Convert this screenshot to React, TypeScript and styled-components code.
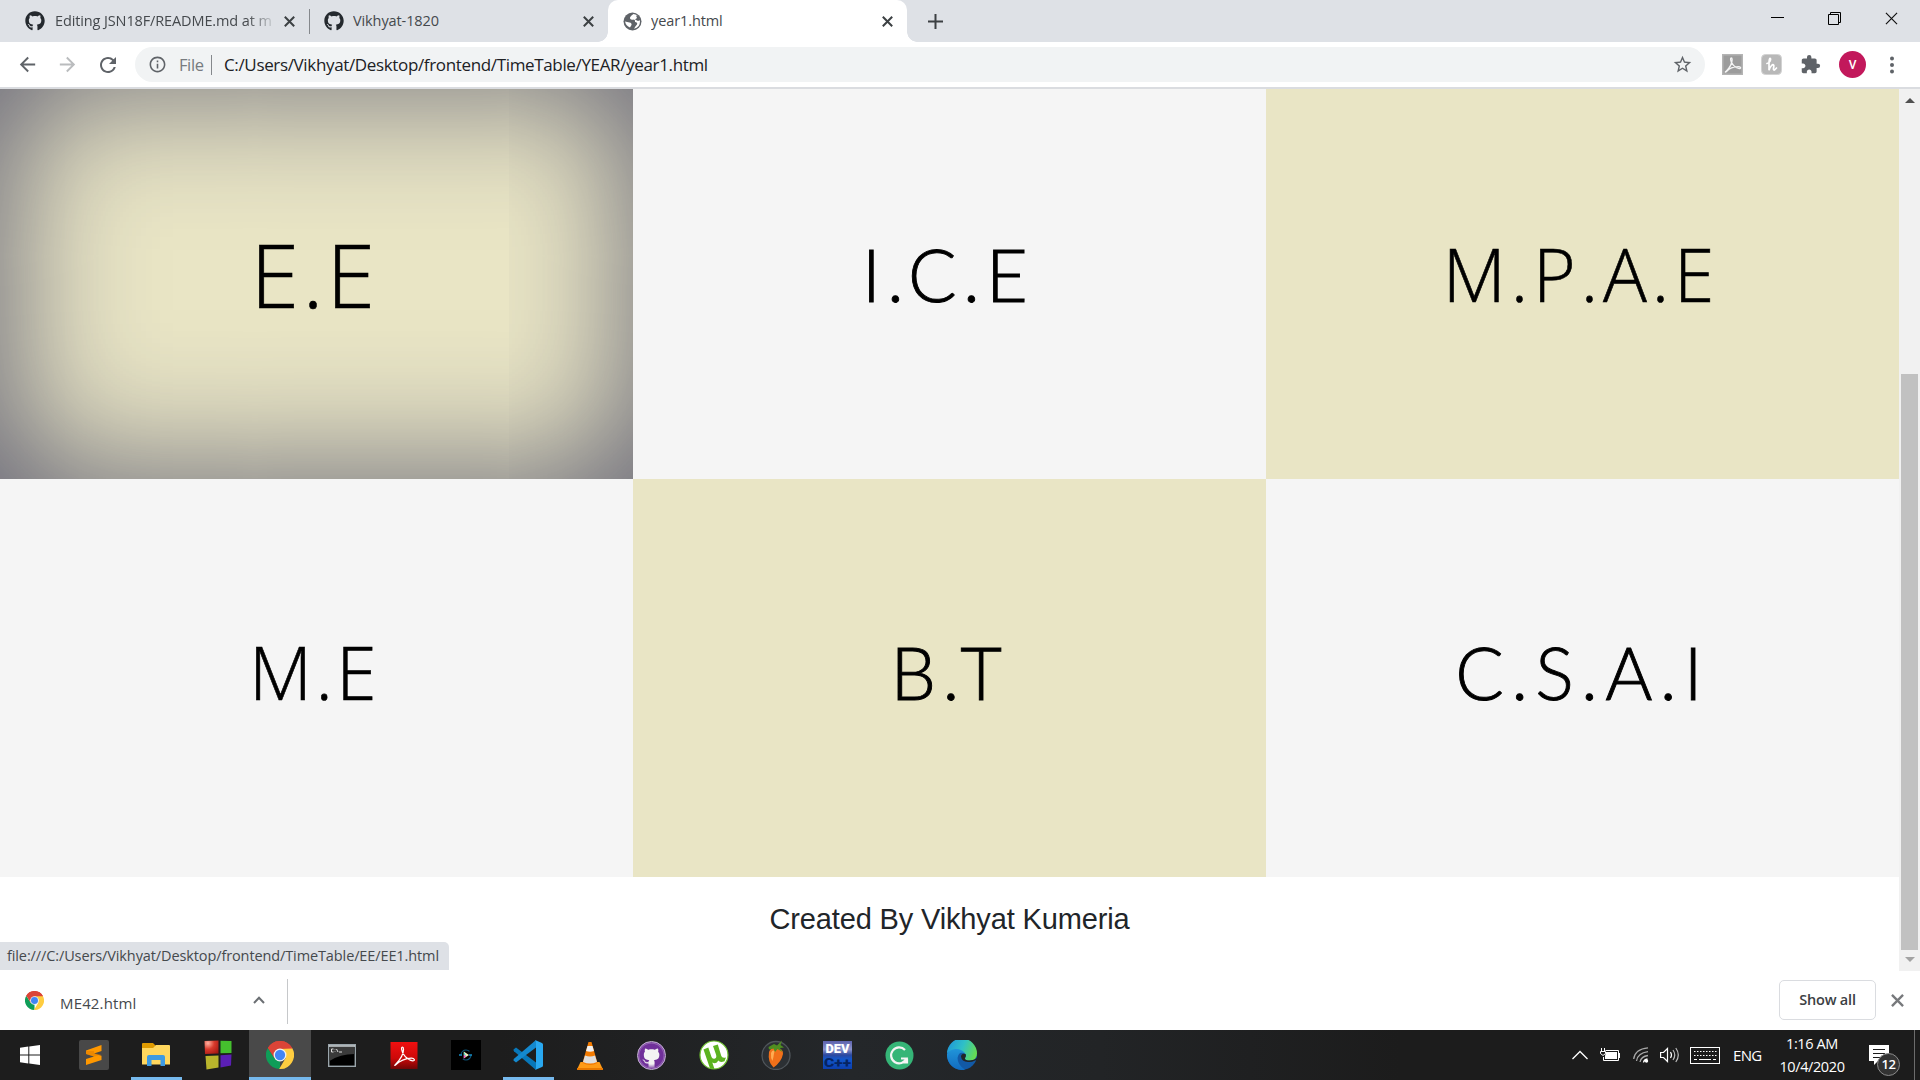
import React from "react";
import styled, { createGlobalStyle, css } from "styled-components";
import { FaGithub } from "react-icons/fa";
import {
  MdPublic,
  MdArrowBack,
  MdArrowForward,
  MdRefresh,
  MdInfoOutline,
  MdStarBorder,
  MdExtension,
} from "react-icons/md";

const GlobalStyle = createGlobalStyle`
  * { box-sizing: border-box; }
  html, body { margin: 0; padding: 0; overflow: hidden; }
  svg { display: block; flex: none; }
`;

const uiFont = css`
  font-family: "Open Sans", "Noto Sans", sans-serif;
`;

const Screen = styled.div`
  width: 1920px;
  height: 1080px;
  display: flex;
  flex-direction: column;
  background: #fff;
  overflow: hidden;
  ${uiFont}
`;

/* ---------- tab strip ---------- */

const TabStrip = styled.div`
  height: 42px;
  display: flex;
  background: #dee1e6;
  padding-left: 10px;
`;

const Tab = styled.div<{ $width: number; $active?: boolean; $divider?: boolean }>`
  position: relative;
  width: ${(p) => p.$width}px;
  height: 42px;
  display: flex;
  align-items: center;
  padding: 0 14px 0 15px;
  color: #45494d;
  background: ${(p) => (p.$active ? "#fff" : "transparent")};
  border-radius: 10px 10px 0 0;
  ${(p) =>
    p.$divider &&
    css`
      &::after {
        content: "";
        position: absolute;
        right: -1px;
        top: 9px;
        width: 1px;
        height: 25px;
        background: #85888c;
      }
    `}
  ${(p) =>
    p.$active &&
    css`
      &::before,
      &::after {
        content: "";
        position: absolute;
        bottom: 0;
        width: 10px;
        height: 10px;
      }
      &::before {
        left: -10px;
        background: radial-gradient(circle at 0 0, transparent 9.5px, #fff 10px);
      }
      &::after {
        right: -10px;
        background: radial-gradient(circle at 100% 0, transparent 9.5px, #fff 10px);
      }
    `}
`;

const TabTitle = styled.span<{ $spacing: number; $fade?: boolean }>`
  flex: 1;
  min-width: 0;
  margin: 0 11px 0 9px;
  overflow: hidden;
  white-space: nowrap;
  font-size: 14.5px;
  line-height: 20px;
  letter-spacing: ${(p) => p.$spacing}px;
  ${(p) =>
    p.$fade &&
    css`
      margin-left: 10px;
      mask-image: linear-gradient(90deg, #000 88%, rgba(0, 0, 0, 0.15));
    `}
`;

const NewTab = styled.div`
  width: 56px;
  display: flex;
  align-items: center;
  justify-content: center;
`;

const WindowButtons = styled.div`
  margin-left: auto;
  display: flex;
  gap: 44px;
  padding: 12px 22px 0 0;
`;

/* ---------- toolbar ---------- */

const Toolbar = styled.div`
  height: 47px;
  display: flex;
  align-items: center;
  padding: 0 20px 0 16px;
  border-bottom: 2px solid #dadce0;
`;

const NavButton = styled.div<{ $muted?: boolean }>`
  width: 40px;
  display: flex;
  color: ${(p) => (p.$muted ? "#babcbe" : "#5f6368")};
`;

const Omnibox = styled.div`
  width: 1570px;
  height: 35px;
  margin-left: -1px;
  padding: 0 12px 0 13px;
  display: flex;
  align-items: center;
  border-radius: 18px;
  background: #f1f3f4;
  color: #5f6368;
`;

const Scheme = styled.span`
  width: 32px;
  margin-left: 12px;
  font-size: 16.5px;
  line-height: 24px;
  letter-spacing: -0.4px;
  color: #777b80;
`;

const SchemeRule = styled.span`
  width: 1px;
  height: 20px;
  margin-right: 12px;
  background: #85888c;
`;

const Url = styled.span`
  flex: 1;
  font-size: 17px;
  line-height: 24px;
  letter-spacing: -0.35px;
  color: #202124;
`;

const Extensions = styled.div`
  flex: 1;
  display: flex;
  align-items: center;
  justify-content: space-between;
  padding-left: 17px;
  color: #5f6368;
`;

const Avatar = styled.div`
  width: 27px;
  height: 27px;
  border-radius: 50%;
  display: flex;
  align-items: center;
  justify-content: center;
  font: 500 12px Roboto, sans-serif;
  color: #fff;
  background: #c2185b;
`;

/* ---------- page ---------- */

const Viewport = styled.div`
  position: relative;
  height: 882px;
  display: flex;
  overflow: hidden;
`;

const Page = styled.main`
  width: 1899px;
  height: 882px;
  overflow: hidden;
`;

const Grid = styled.section`
  display: grid;
  grid-template-columns: repeat(3, 633px);
  grid-auto-rows: 398px;
  margin-top: -8px;
`;

const Tile = styled.a<{ $sand?: boolean; $hovered?: boolean }>`
  display: flex;
  align-items: center;
  justify-content: center;
  color: #000;
  background: ${(p) => (p.$sand ? "#e9e5c5" : "#f5f5f5")};
  box-shadow: ${(p) => (p.$hovered ? "inset 4px 0 142px #58586e" : "none")};
`;

const Branch = styled.span<{ $open?: boolean; $size: number; $spacing: number; $trail: number }>`
  font-family: ${(p) => (p.$open ? '"Open Sans"' : "Lato")}, sans-serif;
  font-weight: 300;
  font-size: ${(p) => p.$size}px;
  line-height: 110px;
  letter-spacing: ${(p) => p.$spacing}px;
  padding: 0 ${(p) => p.$trail}px 13px 0;
  white-space: nowrap;
  -webkit-text-stroke: ${(p) => (p.$open ? 0.6 : 0.9)}px #000;
`;

const Footer = styled.footer`
  padding-top: 24px;
  text-align: center;
  font: 29px/36px "Liberation Sans", Arial, sans-serif;
  letter-spacing: -0.15px;
  color: #212529;
`;

const Scrollbar = styled.div`
  width: 21px;
  display: flex;
  flex-direction: column;
  align-items: center;
  justify-content: space-between;
  padding: 9px 0;
  background: #f1f1f1;
`;

const Arrow = styled.i<{ $down?: boolean }>`
  border: 5px solid transparent;
  ${(p) =>
    p.$down
      ? css`border-top-color: #a3a3a3; border-bottom: 0;`
      : css`border-bottom-color: #505050; border-top: 0;`}
`;

const Thumb = styled.div`
  width: 17px;
  height: 576px;
  margin: 270px 0 7px;
  background: #c1c1c1;
`;

const StatusBubble = styled.div`
  position: absolute;
  left: 0;
  bottom: 1px;
  width: 449px;
  height: 28px;
  padding-left: 7px;
  border-radius: 0 5px 0 0;
  background: #dee1e6;
  color: #45494d;
  font-size: 14.5px;
  line-height: 27px;
  letter-spacing: -0.11px;
  white-space: nowrap;
`;

/* ---------- download shelf ---------- */

const Shelf = styled.div`
  height: 59px;
  display: flex;
  align-items: center;
  padding: 0 16px 1px 0;
`;

const Download = styled.div`
  width: 288px;
  height: 45px;
  margin-top: 3px;
  padding: 0 22px 3px 25px;
  display: flex;
  align-items: center;
  border-right: 1px solid #c6c8ca;
`;

const FileName = styled.span`
  flex: 1;
  margin: 5px 0 0 16px;
  font-size: 15px;
  letter-spacing: 0.15px;
  color: #45494d;
`;

const ShowAll = styled.div`
  width: 97px;
  height: 40px;
  margin: 0 15px 0 auto;
  padding-bottom: 1px;
  display: flex;
  align-items: center;
  justify-content: center;
  border: 1px solid #dadce0;
  border-radius: 5px;
  font-size: 14.5px;
  font-weight: 600;
  letter-spacing: -0.2px;
  color: #3c4043;
`;

/* ---------- taskbar ---------- */

const Taskbar = styled.div`
  height: 50px;
  display: flex;
  background: linear-gradient(90deg, #1d1d1d 0, #1d1d1d 500px, #24272a 850px, #222426 1100px, #1c1c1c 1400px);
`;

const StartButton = styled.div`
  width: 63px;
  display: flex;
  align-items: center;
  padding-left: 20px;
`;

const TaskButton = styled.div<{ $running?: boolean; $active?: boolean }>`
  position: relative;
  width: 61.98px;
  display: flex;
  align-items: center;
  justify-content: center;
  background: ${(p) => (p.$active ? "#494949" : "transparent")};
  ${(p) =>
    (p.$running || p.$active) &&
    css`
      &::after {
        content: "";
        position: absolute;
        bottom: 0;
        left: ${p.$active ? 0 : 6}px;
        right: ${p.$active ? 0 : 5}px;
        height: 3px;
        background: #76b9ed;
      }
    `}
`;

const Tray = styled.div`
  margin-left: auto;
  display: flex;
  align-items: center;
  color: #fff;
`;

const TrayIcon = styled.div<{ $width: number }>`
  width: ${(p) => p.$width}px;
`;

const Language = styled.span`
  width: 44px;
  font-size: 15px;
  letter-spacing: -0.7px;
`;

const Clock = styled.div`
  width: 70px;
  text-align: center;
  font-size: 14.5px;
  line-height: 23px;
  letter-spacing: -0.4px;
  white-space: nowrap;
`;

const Notifications = styled.div`
  position: relative;
  width: 36px;
  height: 40px;
  padding-top: 9px;
  margin: 2px 9px 0 22px;
`;

const Count = styled.span`
  position: absolute;
  left: 8px;
  top: 17px;
  width: 23px;
  height: 23px;
  border: 1px solid #8b8b8b;
  border-radius: 50%;
  background: #333;
  text-align: center;
  font-size: 13px;
  font-weight: 600;
  line-height: 21px;
  letter-spacing: -0.5px;
`;

const DesktopEdge = styled.div`
  width: 6px;
  height: 50px;
  border-left: 1px solid #6c6c6c;
`;

/* ---------- drawings ---------- */

const Cross = ({ size = 11, color = "#3c4043", weight = 2 }) => (
  <svg width={size} height={size} viewBox="0 0 11 11" stroke={color} strokeWidth={weight}>
    <path d="M.8.8l9.4 9.4M10.2.8L.8 10.2" />
  </svg>
);

const GlobeIcon = () => (
  <svg width="19" height="19" viewBox="0 0 19 19">
    <circle cx="9.500" cy="9.500" r="9" fill="#5f6368" />
    <path
      d="M2 9.500L6.500 10.500Q9 11 8.500 13L7 15.500Q3 14 2 9.500zM10.500 2Q6.500 4.500 7 6.500Q8 8.200 11 7.500Q12.500 8 12 10Q15 10.500 14 12.500Q12.500 14 11 16.800Q17 15.500 17 9.500Q16.500 3 10.500 2z"
      fill="#fff"
    />
    <path d="M13 3.500L14 6L12 7.500L15 9L17.500 8L16 4.500z" fill="#5f6368" />
  </svg>
);

const ChromeLogo = ({ size }: { size: number }) => (
  <svg width={size} height={size} viewBox="0 0 48 48">
    <path fill="#db4437" d="M24 24L3.2 12A24 24 0 0 1 44.8 12z" />
    <path fill="#0f9d58" d="M24 24V48A24 24 0 0 1 3.2 12L14.5 29.5z" />
    <path fill="#ffcd40" d="M44.8 12A24 24 0 0 1 22.500 47.950L33.500 29.500L24 13.500z" />
    <path fill="#db4437" d="M24 13H45.300L44.800 12A24 24 0 0 0 3.200 12L14.500 29.500z" />
    <circle cx="24" cy="24" r="11" fill="#f1f1f1" />
    <circle cx="24" cy="24" r="8.800" fill="#4285f4" />
  </svg>
);

const acrobatCurve =
  "M5 23.500C8 20.500 13.500 14 13.500 7.500C13.500 4.500 11.300 4.500 11.500 7.500C12 12.500 17.500 19 23 19.500C26 19.500 25 16.700 21.500 16.800C15.500 17 9 20 6.300 23C4.800 24.700 3.700 24.300 5 23.500z";

const AcrobatMini = () => (
  <svg width="21" height="21" viewBox="0 0 28 28">
    <rect width="28" height="28" fill="#b4b4b4" />
    <rect x="2" y="2" width="24" height="24" fill="#9c9c9c" />
    <path d={acrobatCurve} fill="none" stroke="#f5f5f5" strokeWidth="1.800" />
  </svg>
);

const HoneyIcon = () => (
  <svg width="21" height="21" viewBox="0 0 21 21">
    <rect x=".5" y=".5" width="20" height="20" rx="4" fill="#b8b8b8" stroke="#d2d2d2" />
    <path
      d="M6 9.500C9 9 10.500 4.500 9 4.300C7.300 4.500 8.300 11 8 16.200C9 12.500 12.300 9 12.800 11.500C13 13.500 11.500 16.300 13.500 16L15.500 14"
      fill="none"
      stroke="#fff"
      strokeWidth="1.700"
      strokeLinecap="round"
    />
  </svg>
);

const SublimeIcon = () => (
  <svg width="30" height="30" viewBox="0 0 30 30">
    <rect width="30" height="30" rx="2" fill="#484848" />
    <path fill="#ff9800" d="M7 10.500L22.500 5V11L15 13.500L22.500 15.800V20L7 25V19L15 16.500L7 14z" />
    <path fill="#d97700" d="M7 14L15 16.500L22.500 14.500L15 13.200V11L7 11z" opacity=".45" />
  </svg>
);

const FolderIcon = () => (
  <svg width="28" height="24" viewBox="0 0 28 24">
    <path fill="#e09b00" d="M0 1Q0 0 1 0H11L14 3V7H0z" />
    <path fill="#ffd75e" d="M0 5H11L14 2H27Q28 2 28 3V21.500H0z" />
    <path fill="#3d9ae2" d="M5 23V14Q5 12 7 12H21Q23 12 23 14V23H18.500V17H9.500V23z" />
  </svg>
);

const BlocksIcon = () => (
  <svg width="28" height="30" viewBox="0 0 28 30">
    <defs>
      <radialGradient id="redBlock" cx=".25" cy=".2" r="1">
        <stop offset="0" stopColor="#ffb0a0" />
        <stop offset=".45" stopColor="#d93a2c" />
        <stop offset="1" stopColor="#a01510" />
      </radialGradient>
    </defs>
    <path fill="url(#redBlock)" d="M.5 1L14.500.5V13.500L1 14z" />
    <path fill="#45c02e" d="M16.500.7L27.500 1V13L16.500 13.300z" />
    <path fill="#b9b52c" d="M1.500 16L14.500 15.500V27.500L2.500 29.500z" />
    <path fill="#5b1fb5" d="M16.500 15.300L27.500 14.500L27 25.500L16.500 27.500z" />
  </svg>
);

const TerminalIcon = () => (
  <svg width="28" height="23" viewBox="0 0 28 23">
    <rect x=".7" y=".7" width="26.600" height="21.600" fill="#000" stroke="#9aa5ab" strokeWidth="1.400" />
    <path d="M1 2H27" stroke="#cdd3d6" strokeWidth="1.600" />
    <path d="M1.500 3H26.500V10Q12 10 1.500 17z" fill="#3a3a3a" />
    <path d="M5.500 5H3.500V8H5.500M7 5.500V6M7 7.500V8M8.500 5L10 8M11 8H14" fill="none" stroke="#ddd" />
  </svg>
);

const AcrobatIcon = () => (
  <svg width="28" height="27" viewBox="0 0 28 28">
    <defs>
      <linearGradient id="acrobat" x1="0" y1="0" x2="0" y2="1">
        <stop offset="0" stopColor="#f01010" />
        <stop offset=".6" stopColor="#cc0909" />
        <stop offset="1" stopColor="#720505" />
      </linearGradient>
    </defs>
    <rect width="28" height="28" fill="url(#acrobat)" />
    <path d={acrobatCurve} fill="none" stroke="#fff" strokeWidth="1.300" />
  </svg>
);

const PlayerIcon = () => (
  <svg width="30" height="30" viewBox="0 0 30 30">
    <rect width="30" height="30" fill="#000" />
    <circle cx="15" cy="15" r="5" fill="none" stroke="#0c5578" strokeWidth="1.200" strokeDasharray="11 4.700" />
    <path d="M8 15h3M18 15h3" stroke="#168cc4" strokeWidth="1.500" />
    <path d="M12.800 11.500V18.500L18 15z" fill="#f4f4c0" />
    <path d="M12.800 11.500V15L15 16z" fill="#46d7c8" />
    <path d="M12.800 18.500V15L15 16z" fill="#f044c8" />
  </svg>
);

const CodeIcon = () => (
  <svg width="30" height="30" viewBox="0 0 30 30">
    <path fill="#0877b9" d="M.5 9.500L3 7.500L23 22.500V30L1 11.200Q.2 10.300.5 9.500z" />
    <path fill="#1489cf" d="M.5 20.500L3 22.500L23 7.500V0L1 18.800Q.2 19.700.5 20.500z" />
    <path fill="#29a8f0" d="M22 0L29 3Q30 3.500 30 4.500V25.500Q30 26.500 29 27L22 30Q23 29.500 23 28V2Q23 .5 22 0z" />
  </svg>
);

const ConeIcon = () => (
  <svg width="26" height="29" viewBox="0 0 26 29">
    <path fill="#ff9b17" d="M3.500 21H22.500L26 28.500H0z" />
    <path fill="#e97800" d="M0 27H26V29H0z" />
    <path fill="#f47b00" d="M11.500 1H14.500L20.500 22Q13 26 5.500 22z" />
    <path fill="#f1f1f1" d="M10.500 5H15.500L17 10Q13 11.500 9 10z" />
    <path fill="#dedede" d="M8 14.500Q13 16.500 18 14.500L20 21Q13 24 6 21z" />
  </svg>
);

const OctocatBadge = styled.div`
  width: 29px;
  height: 29px;
  padding: 1px;
  border: 1px solid #c9b8d8;
  border-radius: 50%;
  background: radial-gradient(circle, #f3f3f3 45%, #70309a 72%);
  color: #70309a;
`;

const TorrentIcon = () => (
  <svg width="30" height="30" viewBox="0 0 30 30">
    <circle cx="15" cy="15" r="14" fill="#fff" stroke="#6cbf2e" strokeWidth="1.200" />
    <path
      d="M4.500 9.500L9.300 7.500L12.500 17Q13.500 19.500 16 18.500Q18 17.500 17 14.500L14 6L18.800 4.500L22.300 16Q23 18.500 27 17.500L25.500 21.200Q21 23 19.300 20.500Q17.500 24.500 13.300 22.500L15.500 29L11 28.500z"
      fill="#5cb320"
    />
  </svg>
);

const FruitIcon = () => (
  <svg width="30" height="30" viewBox="0 0 30 30">
    <circle cx="15" cy="15.500" r="14" fill="#2c3034" stroke="#50565b" strokeWidth="1.300" />
    <path fill="#f0701a" d="M8 12Q10 7 15.500 8Q22.500 8.500 22 14Q20.500 22 12.500 27.500Q6.500 22 8 12z" />
    <path fill="#ffad52" d="M10 13Q11.500 9.500 13.500 11Q12.500 17 11.500 21Q9.500 18 10 13z" />
    <path fill="#4f8e20" d="M7.500 7L13 4L16 5.500L21 .5L19.500 5L23 7.500L19 8L21.500 12L16.500 9L14 12L12.500 8.500L8 9.500z" />
  </svg>
);

const DevIcon = () => (
  <svg width="29" height="28" viewBox="0 0 29 28">
    <defs>
      <linearGradient id="dev" x1="0" y1="0" x2="0" y2="1">
        <stop offset="0" stopColor="#5d62ad" />
        <stop offset=".3" stopColor="#8b93cb" />
        <stop offset=".5" stopColor="#2c489e" />
        <stop offset=".65" stopColor="#1257cc" />
        <stop offset="1" stopColor="#0c3fae" />
      </linearGradient>
    </defs>
    <rect width="29" height="28" fill="url(#dev)" />
    <text x="14.500" y="11.700" textAnchor="middle" textLength="24" lengthAdjust="spacingAndGlyphs" fontFamily="Roboto" fontSize="12" fontWeight="900" fill="#fff">DEV</text>
    <text x="14.500" y="26" textAnchor="middle" textLength="27" lengthAdjust="spacingAndGlyphs" fontFamily="Roboto" fontSize="12" fontWeight="900" fill="#062463">C++</text>
  </svg>
);

const GrammarIcon = () => (
  <svg width="29" height="29" viewBox="0 0 29 29">
    <circle cx="14.500" cy="14.500" r="14" fill="#35b577" />
    <path
      d="M20 9A8 8 0 1 0 21.500 17.500H16M18 21.500H22V17.500"
      fill="none"
      stroke="#f4f4f4"
      strokeWidth="2.200"
    />
  </svg>
);

const EdgeIcon = () => (
  <svg width="30" height="30" viewBox="0 0 30 30">
    <defs>
      <linearGradient id="edgeTop" x1="0" y1=".3" x2="1" y2=".6">
        <stop offset="0" stopColor="#1f98d9" />
        <stop offset=".5" stopColor="#2fc0c7" />
        <stop offset="1" stopColor="#67dc4e" />
      </linearGradient>
      <linearGradient id="edgeSide" x1="0" y1="0" x2="0" y2="1">
        <stop offset="0" stopColor="#2196da" />
        <stop offset="1" stopColor="#116bc0" />
      </linearGradient>
    </defs>
    <circle cx="15" cy="15" r="15" fill="#1259a6" />
    <path fill="url(#edgeSide)" d="M0 14Q3 7 10 8Q18 9 18.500 14Q12 10 10.500 18Q10.500 25 18 29.700A15 15 0 0 1 0 14z" />
    <path fill="url(#edgeTop)" d="M0 13.500A15 15 0 0 1 30 13.500Q30 20 23 20.500Q17.500 20.500 18 18Q20 15.500 17.500 12.500Q14 8.500 8 9Q2 10 0 13.500z" />
    <path fill="#222527" d="M18.500 14Q14.500 13 14 16.500Q14.500 21.500 21 22Q25 22.300 27.500 20.800L31 19.500V17Q28 20.500 23 20.500Q17.500 20.500 18 18Q19.500 16 18.500 14z" />
  </svg>
);

const branches = [
  { name: "E.E", sand: true, hovered: true, open: true, size: 88, spacing: 3.2, trail: 4 },
  { name: "I.C.E", size: 72, spacing: 6.2, trail: 3 },
  { name: "M.P.A.E", sand: true, open: true, size: 73, spacing: 4.9, trail: 3 },
  { name: "M.E", open: true, size: 73, spacing: 3.5, trail: 4 },
  { name: "B.T", sand: true, size: 72, spacing: 6.5, trail: 0 },
  { name: "C.S.A.I", size: 72, spacing: 7.3, trail: 0 },
];

export default function App() {
  return (
    <Screen>
      <GlobalStyle />
      <TabStrip>
        <Tab $width={299} $divider>
          <FaGithub size={20} color="#24292e" />
          <TabTitle $spacing={-0.12} $fade>Editing JSN18F/README.md at m</TabTitle>
          <Cross />
        </Tab>
        <Tab $width={299}>
          <FaGithub size={20} color="#24292e" />
          <TabTitle $spacing={-0.1}>Vikhyat-1820</TabTitle>
          <Cross />
        </Tab>
        <Tab $width={299} $active>
          <GlobeIcon />
          <TabTitle $spacing={-0.1}>year1.html</TabTitle>
          <Cross />
        </Tab>
        <NewTab>
          <svg width="15" height="15" viewBox="0 0 15 15" stroke="#3c4043" strokeWidth="2">
            <path d="M7.500 0V15M0 7.500H15" />
          </svg>
        </NewTab>
        <WindowButtons>
          <svg width="13" height="13" stroke="#000"><path d="M0 5.500H13" /></svg>
          <svg width="13" height="13" fill="none" stroke="#000"><path d="M.5 2.500H10.500V12.500H.5zM2.500 2.500V.5H12.500V10.500H10.500" /></svg>
          <Cross size={13} color="#111" weight={1} />
        </WindowButtons>
      </TabStrip>

      <Toolbar>
        <NavButton><MdArrowBack size={23} /></NavButton>
        <NavButton $muted><MdArrowForward size={23} /></NavButton>
        <NavButton><MdRefresh size={24} /></NavButton>
        <Omnibox>
          <MdInfoOutline size={19} />
          <Scheme>File</Scheme>
          <SchemeRule />
          <Url>C:/Users/Vikhyat/Desktop/frontend/TimeTable/YEAR/year1.html</Url>
          <MdStarBorder size={21} />
        </Omnibox>
        <Extensions>
          <AcrobatMini />
          <HoneyIcon />
          <MdExtension size={21} />
          <Avatar>V</Avatar>
          <svg width="16" height="18" viewBox="0 0 16 18" fill="#5f6368">
            <circle cx="8" cy="2.500" r="2" /><circle cx="8" cy="9" r="2" /><circle cx="8" cy="15.500" r="2" />
          </svg>
        </Extensions>
      </Toolbar>

      <Viewport>
        <Page>
          <Grid>
            {branches.map((b) => (
              <Tile key={b.name} $sand={b.sand} $hovered={b.hovered}>
                <Branch $open={b.open} $size={b.size} $spacing={b.spacing} $trail={b.trail}>{b.name}</Branch>
              </Tile>
            ))}
          </Grid>
          <Footer>Created By Vikhyat Kumeria</Footer>
        </Page>
        <Scrollbar>
          <Arrow />
          <Thumb />
          <Arrow $down />
        </Scrollbar>
        <StatusBubble>file:///C:/Users/Vikhyat/Desktop/frontend/TimeTable/EE/EE1.html</StatusBubble>
      </Viewport>

      <Shelf>
        <Download>
          <ChromeLogo size={19} />
          <FileName>ME42.html</FileName>
          <svg width="12" height="8" viewBox="0 0 12 8" fill="none" stroke="#6b6f73" strokeWidth="2"><path d="M1 7L6 1.800L11 7" /></svg>
        </Download>
        <ShowAll>Show all</ShowAll>
        <Cross size={13} color="#77797c" weight={2} />
      </Shelf>

      <Taskbar>
        <StartButton>
          <svg width="20" height="20" viewBox="0 0 20 20" fill="#fff">
            <path d="M0 2.800L8.300 1.600V9.500H0zM9.300 1.500L20 0V9.500H9.300zM0 10.500H8.300V18.400L0 17.200zM9.300 10.500H20V20L9.300 18.500z" />
          </svg>
        </StartButton>
        <TaskButton><SublimeIcon /></TaskButton>
        <TaskButton $running><FolderIcon /></TaskButton>
        <TaskButton><BlocksIcon /></TaskButton>
        <TaskButton $active><ChromeLogo size={28} /></TaskButton>
        <TaskButton><TerminalIcon /></TaskButton>
        <TaskButton><AcrobatIcon /></TaskButton>
        <TaskButton><PlayerIcon /></TaskButton>
        <TaskButton $running><CodeIcon /></TaskButton>
        <TaskButton><ConeIcon /></TaskButton>
        <TaskButton><OctocatBadge><FaGithub size={25} /></OctocatBadge></TaskButton>
        <TaskButton><TorrentIcon /></TaskButton>
        <TaskButton><FruitIcon /></TaskButton>
        <TaskButton><DevIcon /></TaskButton>
        <TaskButton><GrammarIcon /></TaskButton>
        <TaskButton><EdgeIcon /></TaskButton>
        <Tray>
          <TrayIcon $width={28}>
            <svg width="16" height="10" fill="none" stroke="#fff" strokeWidth="1.300"><path d="M.5 9L8 1.500L15.500 9" /></svg>
          </TrayIcon>
          <TrayIcon $width={33}>
            <svg width="20" height="14" viewBox="0 0 20 14" fill="none" stroke="#fff">
              <path d="M5.500 2.500H18.500V12.500H3.500V9M19.500 5V10" />
              <path fill="#fff" stroke="none" d="M6 4H17V11H5V8z" />
              <path d="M1.500 0V3M4.500 0V3M.500 3.500H5.500V5.500L3 7.500L.500 5.500z" />
            </svg>
          </TrayIcon>
          <TrayIcon $width={27}>
            <svg width="16" height="16" viewBox="0 0 16 16" fill="none" stroke="#a8a8a8" strokeWidth="1.300">
              <path d="M.7 12Q2 2 15 .8M3.500 14Q4.500 6 15 4.600M7 15Q8 9.500 15 8.500" />
              <path d="M10.500 15.500Q11 12.500 14.500 12" stroke="#fff" />
              <circle cx="13.500" cy="14" r="1.700" fill="#fff" stroke="none" />
            </svg>
          </TrayIcon>
          <TrayIcon $width={30}>
            <svg width="21" height="16" viewBox="0 0 21 16" fill="none" stroke="#fff" strokeWidth="1.200">
              <path d="M.6 5.500H3.500L7.500 1.500V14.500L3.500 10.500H.6zM10.500 5Q12.500 8 10.500 11" />
              <path d="M13 3Q16.500 8 13 13M15.800 1Q20.800 8 15.800 15" stroke="#bbb" />
            </svg>
          </TrayIcon>
          <TrayIcon $width={43}>
            <svg width="30" height="17" viewBox="0 0 30 17" fill="none" stroke="#fff">
              <rect x=".5" y=".5" width="29" height="16" />
              <path d="M4 4.500H27M4 8.500H27" strokeDasharray="1.500 1.500" />
              <path d="M4 12.500H7M9 12.500H21M23 12.500H26" />
            </svg>
          </TrayIcon>
          <Language>ENG</Language>
          <Clock>1:16 AM<br />10/4/2020</Clock>
          <Notifications>
            <svg width="20" height="20" viewBox="0 0 20 20">
              <path fill="#fff" d="M0 0H20V16H9L5 20V16H0z" />
              <path d="M4 4.500H16M4 8.500H16M4 12.500H12" stroke="#1c1c1c" strokeWidth="1.200" />
            </svg>
            <Count>12</Count>
          </Notifications>
          <DesktopEdge />
        </Tray>
      </Taskbar>
    </Screen>
  );
}
